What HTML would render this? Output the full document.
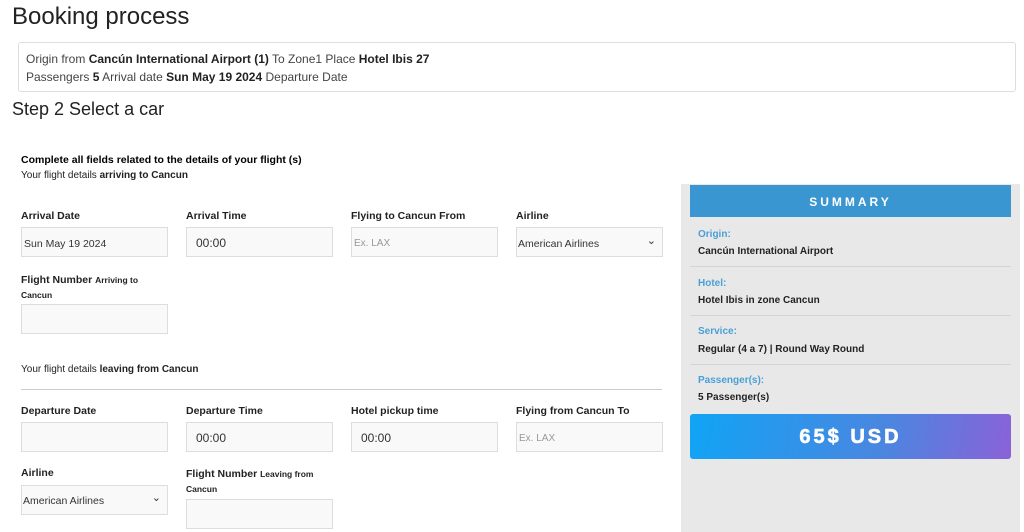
<!DOCTYPE html>
<html><head><meta charset="utf-8"><style>
*{box-sizing:border-box;margin:0;padding:0}
body{width:1024px;height:532px;overflow:hidden;background:#fff;font-family:"Liberation Sans",Arial,sans-serif;color:#222;position:relative}
.a{position:absolute;white-space:nowrap}
h1{position:absolute;left:12px;top:3px;font-size:24px;font-weight:normal;color:#222}
.info{position:absolute;left:18px;top:42px;width:998px;height:50px;border:1px solid #ddd;border-radius:3px;padding:7px 7px;font-size:12px;line-height:18px;color:#444}
.info b{color:#222}
.step{left:12px;top:99px;font-size:18px;color:#222}
.lbl{font-size:10.5px;font-weight:bold;color:#222}
.lbl small{font-size:8.5px}
.in{position:absolute;width:147px;height:30px;background:#f9f9f9;border:1px solid #ddd;font-size:11px;padding:0 9px;line-height:30px;color:#333}
.ph{color:#999;font-size:10px;padding-left:2px}
.sel{padding-left:1px;font-size:10.5px}
.sel:after{content:"⌄";position:absolute;right:6px;top:-3px;font-size:11px}
.side{position:absolute;left:681px;top:184px;width:339px;height:348px;background:#e8e8e8}
.sh{position:absolute;left:690px;top:185px;width:321px;height:32px;background:#3a96d0;color:#fff;font-weight:bold;font-size:12px;letter-spacing:3px;text-align:center;line-height:35px}
.sk{font-size:10px;color:#4a9fd6;font-weight:bold}
.sv{font-size:10px;color:#222;font-weight:bold}
.hr{position:absolute;left:690px;width:321px;height:1px;background:#d4d4d4}
.price{position:absolute;left:690px;top:414px;width:321px;height:45px;border-radius:3px;background:linear-gradient(100deg,#10a4f5,#4a86e0 60%,#8a62d8);color:#fff;font-weight:bold;font-size:20px;letter-spacing:3px;text-align:center;line-height:47px;-webkit-text-stroke:0.6px #fff}
</style></head><body>
<h1>Booking process</h1>
<div class="info">Origin from <b>Cancún International Airport (1)</b> To Zone1 Place <b>Hotel Ibis 27</b><br>Passengers <b>5</b> Arrival date <b>Sun May 19 2024</b> Departure Date</div>
<div class="a step">Step 2 Select a car</div>
<div class="a" style="left:21px;top:154px;font-size:10.5px;font-weight:bold;color:#000">Complete all fields related to the details of your flight (s)</div>
<div class="a" style="left:21px;top:170px;font-size:10px">Your flight details <b>arriving to Cancun</b></div>

<div class="a lbl" style="left:21px;top:210px">Arrival Date</div>
<div class="a lbl" style="left:186px;top:210px">Arrival Time</div>
<div class="a lbl" style="left:351px;top:210px">Flying to Cancun From</div>
<div class="a lbl" style="left:516px;top:210px">Airline</div>
<div class="in" style="left:21px;top:227px;padding-left:2px;font-size:10.5px;line-height:32px">Sun May 19 2024</div>
<div class="in" style="left:186px;top:227px;font-size:12px">00:00</div>
<div class="in ph" style="left:351px;top:227px;line-height:32px">Ex. LAX</div>
<div class="in sel" style="left:516px;top:227px;line-height:32px">American Airlines</div>
<div class="a lbl" style="left:21px;top:273px;line-height:15px">Flight Number <small>Arriving to<br>Cancun</small></div>
<div class="in" style="left:21px;top:304px"></div>

<div class="a" style="left:21px;top:364px;font-size:10px">Your flight details <b>leaving from Cancun</b></div>
<div class="a" style="left:21px;top:389px;width:641px;height:1px;background:#ccc"></div>
<div class="a lbl" style="left:21px;top:405px">Departure Date</div>
<div class="a lbl" style="left:186px;top:405px">Departure Time</div>
<div class="a lbl" style="left:351px;top:405px">Hotel pickup time</div>
<div class="a lbl" style="left:516px;top:405px">Flying from Cancun To</div>
<div class="in" style="left:21px;top:422px"></div>
<div class="in" style="left:186px;top:422px;font-size:12px">00:00</div>
<div class="in" style="left:351px;top:422px;font-size:12px">00:00</div>
<div class="in ph" style="left:516px;top:422px;line-height:32px">Ex. LAX</div>
<div class="a lbl" style="left:21px;top:467px">Airline</div>
<div class="a lbl" style="left:186px;top:467px;line-height:15px">Flight Number <small>Leaving from<br>Cancun</small></div>
<div class="in sel" style="left:21px;top:485px;line-height:30px">American Airlines</div>
<div class="in" style="left:186px;top:499px"></div>

<div class="side"></div>
<div class="sh">SUMMARY</div>
<div class="a sk" style="left:698px;top:229px">Origin:</div>
<div class="a sv" style="left:698px;top:246px">Cancún International Airport</div>
<div class="hr" style="top:266px"></div>
<div class="a sk" style="left:698px;top:278px">Hotel:</div>
<div class="a sv" style="left:698px;top:295px">Hotel Ibis in zone Cancun</div>
<div class="hr" style="top:315px"></div>
<div class="a sk" style="left:698px;top:326px">Service:</div>
<div class="a sv" style="left:698px;top:344px">Regular (4 a 7) | Round Way Round</div>
<div class="hr" style="top:364px"></div>
<div class="a sk" style="left:698px;top:375px">Passenger(s):</div>
<div class="a sv" style="left:698px;top:392px">5 Passenger(s)</div>
<div class="price">65$ USD</div>
</body></html>
